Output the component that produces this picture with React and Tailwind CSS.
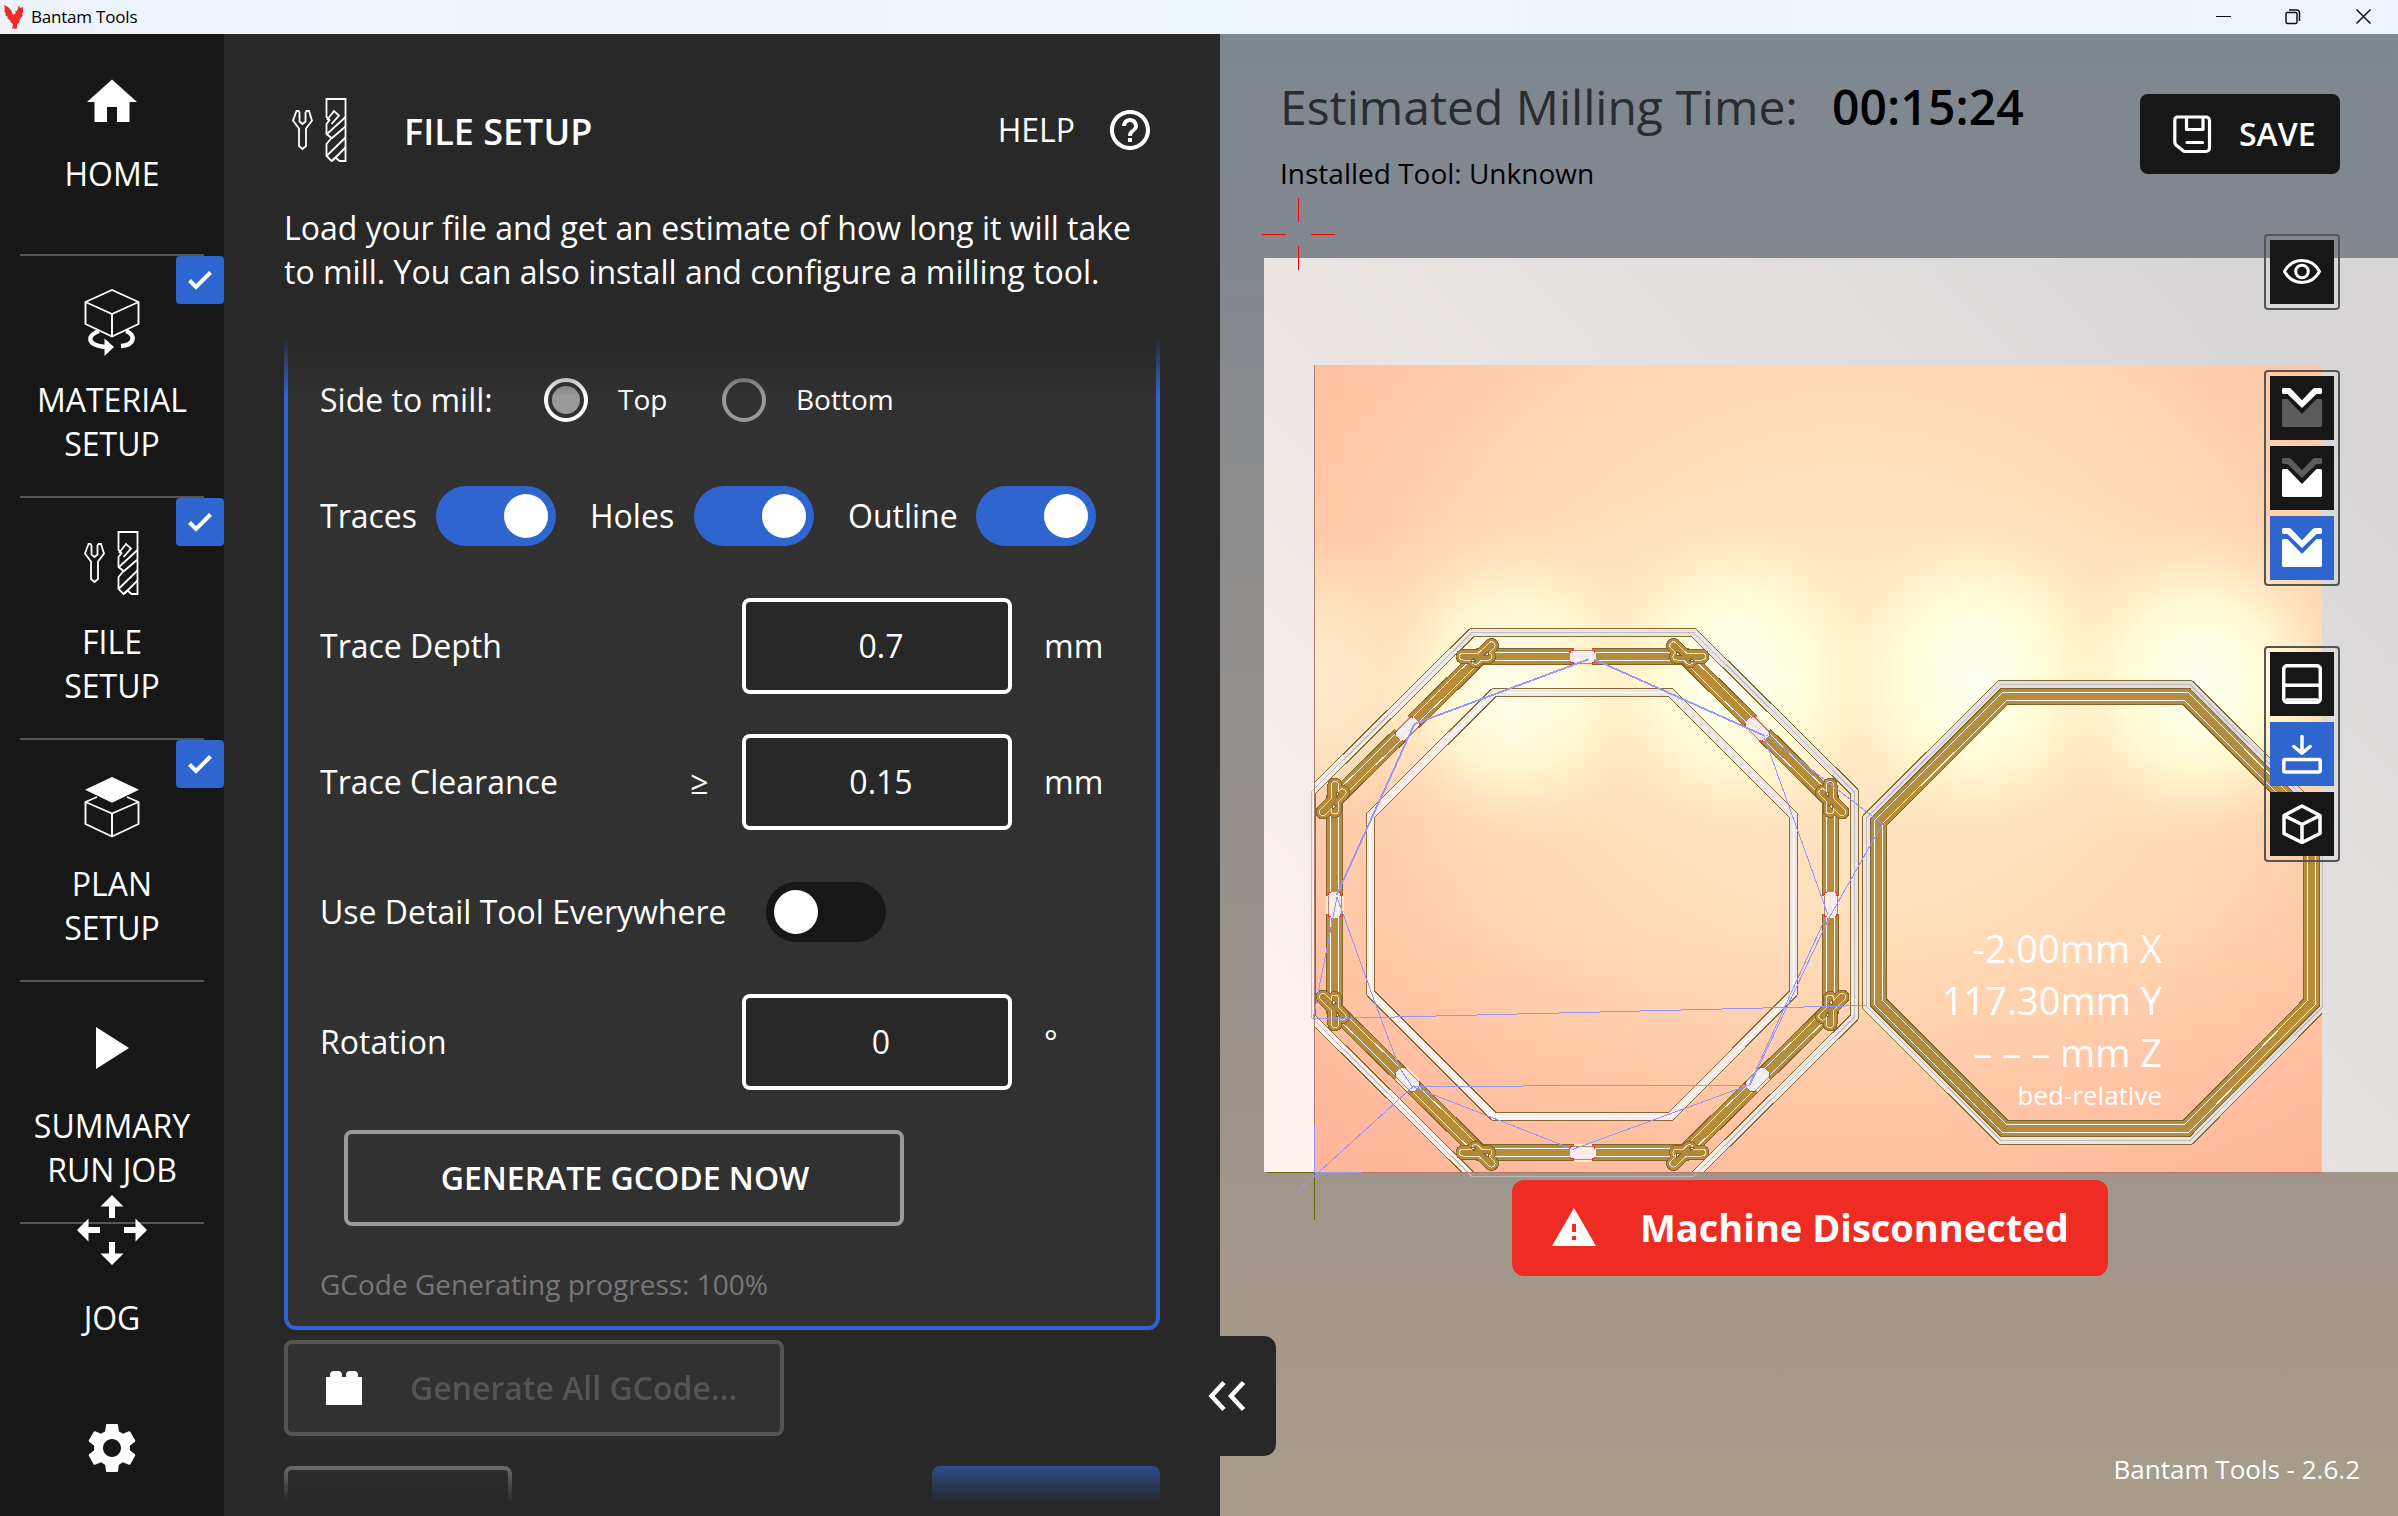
import React from "react";
import { MdHome, MdSettings, MdHelpOutline, MdWarning } from "react-icons/md";

/* ---------- Title bar ---------- */

function TitleBar() {
  return (
    <div className="flex h-[34px] shrink-0 items-center justify-between bg-linear-to-r from-[#eef3fb] from-0% via-[#ecf5f7] via-50% to-[#eff3fb]">
      <div className="flex items-center gap-[7px] pl-1">
        <svg className="h-6 w-5" viewBox="0 0 20 24" fill="#ee2c24">
          <path d="M0 0l4 2 3 3 2 5 3-2-1-2 2 0 2-6 1 3 3-1v5l-1 2 1 1-3 4-1 4-2 1v5l-1-1-1 3-1-3-2 1 1-5-3-2 1-1-4-3 1-1-3-2 1-1-2-3 1-1z" />
        </svg>
        <span className="text-[17px] leading-[22px] tracking-[-0.2px] text-black">Bantam Tools</span>
      </div>
      <svg className="mr-[22px] h-[34px] w-[164px]" viewBox="2212 0 164 34" fill="none" stroke="#111" strokeWidth="1.5">
        <path d="M2216 16.5h15" strokeWidth="1" />
        <rect x="2286" y="12.5" width="11" height="11" rx="1.5" />
        <path d="M2289 10h7.5a3 3 0 0 1 3 3v8" />
        <path d="M2356.500 9.500l14 14M2370.500 9.500l-14 14" />
      </svg>
    </div>
  );
}

/* ---------- Sidebar ---------- */

function CubeRotateIcon() {
  return (
    <svg className="h-[122px] w-[72px]" viewBox="76 256 72 122" fill="none" stroke="#fff">
      <path d="M85.500 302L112 290l26.500 12v22L112 336.500 85.500 324zM85.500 302L112 314l26.500-12M112 314v22.500" strokeWidth="1.900" />
      <path d="M99 331C86 336 87 345 105 347" strokeWidth="4.500" />
      <path d="M126 331C136 335 135 345 121 346" strokeWidth="4.500" />
      <path d="M104.500 338.500l9.500 8.500-9.500 9z" fill="#fff" stroke="none" />
    </svg>
  );
}

function BitPaths() {
  return (
    <g fill="none" stroke="#fff" strokeWidth="1.800">
      <path d="M4.500 14L1 23.500l6 8V49l3.500 3 3.500-3V31.500l6-8L17 14h-2.500l-1 1.500v9l-3 2.500-3-2.500v-9L6.500 14z" />
      <path d="M34.500 20V2h19v62h-6l-4-3.500-4 3.500-5-5V47l5-6-5-4V27l3-4z" />
      <path d="M35 23l7-9 5 4.500-7.500 8.500M35 37l18.500-17M39.500 41.500l14-12M35 58.500l18.500-18M40 64l13.500-13.500" />
    </g>
  );
}

function FileSetupIcon() {
  return (
    <svg className="h-[122px] w-[72px]" viewBox="-8 -32 72 122">
      <BitPaths />
    </svg>
  );
}

function PlanIcon() {
  return (
    <svg className="h-[122px] w-[72px]" viewBox="76 740 72 122" fill="none" stroke="#fff" strokeWidth="1.900">
      <path d="M112 777l27 12.800-27 12.900-27-12.900z" fill="#fff" stroke="none" />
      <path d="M97 797l-11.500 5v22l26.500 12.500 26.500-12.500v-22L127 797M85.500 802L112 813.500l26.500-11.500M112 813.500v23" />
    </svg>
  );
}

function CheckBadge() {
  return (
    <div className="absolute top-0 right-0 flex h-12 w-12 items-center justify-center rounded-[4px] bg-[#2f65cf]">
      <svg className="h-6 w-6" viewBox="0 0 24 24" fill="none" stroke="#fff" strokeWidth="4">
        <path d="M1.500 12.500l6.500 6.500L22.500 4.500" />
      </svg>
    </div>
  );
}

function NavItem({ icon, lines, done }) {
  return (
    <div className="relative flex h-[242px] shrink-0 flex-col items-center">
      {done && <CheckBadge />}
      <div className="flex h-[122px] items-center justify-center">{icon}</div>
      <div className="flex-1 text-center text-[32px] leading-[44px] text-white">
        {lines.map((l) => (
          <div key={l}>{l}</div>
        ))}
      </div>
      <div className="h-[2px] w-[184px] bg-[#555]" />
    </div>
  );
}

function Sidebar() {
  return (
    <nav className="flex w-[224px] shrink-0 flex-col bg-[#171717]">
      <div className="flex h-[222px] shrink-0 flex-col items-center">
        <div className="flex h-[118px] items-end pb-5">
          <MdHome className="size-[60px] text-white" />
        </div>
        <div className="flex-1 text-[32px] leading-[44px] text-white">HOME</div>
        <div className="h-[2px] w-[184px] bg-[#555]" />
      </div>
      <NavItem icon={<CubeRotateIcon />} lines={["MATERIAL", "SETUP"]} done />
      <NavItem icon={<FileSetupIcon />} lines={["FILE", "SETUP"]} done />
      <NavItem icon={<PlanIcon />} lines={["PLAN", "SETUP"]} done />
      <NavItem
        icon={
          <svg className="mt-[10px] h-11 w-9" viewBox="0 0 36 44" fill="#fff">
            <path d="M2 1l33 21L2 43z" />
          </svg>
        }
        lines={["SUMMARY", "RUN JOB"]}
      />
      <div className="relative -mt-[30px] flex flex-col items-center">
        <svg className="h-[72px] w-[72px]" viewBox="-36 -36 72 72" fill="#fff">
          <path d="M0-35l11.500 11.500H3V-12H-3v-11.500h-8.500zM0 35L-11.500 23.500H-3V12H3v11.500h8.500zM-35 0l11.500-11.500V-3H-12V3h-11.500v8.500zM35 0L23.500 11.500V3H12V-3h11.500v-8.500z" />
        </svg>
        <div className="mt-[30px] text-[32px] leading-[44px] text-white">JOG</div>
      </div>
      <div className="mt-[78px] flex justify-center">
        <MdSettings className="size-[60px] text-white" />
      </div>
    </nav>
  );
}

/* ---------- Settings panel ---------- */

function Toggle({ on }) {
  return (
    <div className={on ? "flex h-[60px] w-[120px] items-center justify-end rounded-full bg-[#2f65cf] p-2" : "flex h-[60px] w-[120px] items-center rounded-full bg-[#171717] p-2"}>
      <div className="h-11 w-11 rounded-full bg-white" />
    </div>
  );
}

function NumberRow({ label, prefix, value, unit }) {
  return (
    <div className="flex h-24 items-center">
      <div className="w-[370px]">{label}</div>
      <div className="w-[52px]">{prefix}</div>
      <div className="flex h-24 w-[270px] items-center justify-center rounded-[8px] border-4 border-white bg-[#282828] pl-2">{value}</div>
      <div className="pl-8">{unit}</div>
    </div>
  );
}

function SettingsPanel() {
  return (
    <section className="relative flex w-[996px] shrink-0 flex-col bg-[#282828] px-[60px] text-[32px] leading-[44px] text-white">
      <div className="flex h-[172px] shrink-0 items-start pt-[63px]">
        <svg className="ml-2 h-[66px] w-14" viewBox="0 0 56 66">
          <BitPaths />
        </svg>
        <div className="mt-[13px] ml-14 flex-1 text-[36px] font-semibold">FILE SETUP</div>
        <div className="mt-[11px] mr-[31px]">HELP</div>
        <MdHelpOutline className="mt-[9px] mr-[6px] size-12" />
      </div>
      <p className="h-[88px] shrink-0 whitespace-nowrap">
        Load your file and get an estimate of how long it will take
        <br />
        to mill. You can also install and configure a milling tool.
      </p>
      <div className="mt-[42px] h-[1166px] shrink-0 overflow-hidden [mask-image:linear-gradient(to_bottom,transparent_0,#000_60px,#000_1106px,transparent_100%)]">
        <div className="flex h-[994px] flex-col rounded-b-[12px] border-x-4 border-b-4 border-[#2f65cf] bg-[#313131] px-8 pt-[42px]">
          <div className="flex h-11 items-center">
            <div className="w-[224px]">Side to mill:</div>
            <div className="flex h-11 w-11 items-center justify-center rounded-full border-4 border-white">
              <div className="h-7 w-7 rounded-full bg-[#999]" />
            </div>
            <div className="ml-[30px] w-[104px] pb-[2px] text-[28px]">Top</div>
            <div className="h-11 w-11 rounded-full border-4 border-[#999]" />
            <div className="ml-[30px] pb-[2px] text-[28px]">Bottom</div>
          </div>
          <div className="mt-16 flex h-[60px] items-center">
            <div className="w-[116px]">Traces</div>
            <Toggle on />
            <div className="ml-[34px] w-[104px]">Holes</div>
            <Toggle on />
            <div className="ml-[34px] w-[128px]">Outline</div>
            <Toggle on />
          </div>
          <div className="mt-[52px] flex flex-col gap-10">
            <NumberRow label="Trace Depth" value="0.7" unit="mm" />
            <NumberRow label="Trace Clearance" prefix="≥" value="0.15" unit="mm" />
          </div>
          <div className="mt-[52px] flex h-[60px] items-center">
            <div className="w-[446px]">Use Detail Tool Everywhere</div>
            <Toggle />
          </div>
          <div className="mt-[52px]">
            <NumberRow label="Rotation" value="0" unit="°" />
          </div>
          <div className="mt-10 ml-6 flex h-24 w-[560px] shrink-0 items-center justify-center rounded-[8px] border-4 border-[#999] pl-[2px] font-semibold">
            GENERATE GCODE NOW
          </div>
          <div className="mt-[39px] text-[28px] leading-[38px] text-[#777]">GCode Generating progress: 100%</div>
        </div>
        <div className="mt-[10px] flex h-24 w-[500px] items-center rounded-[8px] border-4 border-[#555] bg-[#313131] pl-[38px] font-semibold text-[#555]">
          <svg className="h-[34px] w-9" viewBox="0 0 36 34" fill="#fff">
            <path d="M0 6h4V4a4 4 0 0 1 4-4h4a4 4 0 0 1 4 4v2h4V4a4 4 0 0 1 4-4h4a4 4 0 0 1 4 4v2h4v28H0z" />
          </svg>
          <span className="ml-12">Generate All GCode...</span>
        </div>
        <div className="mt-[30px] flex justify-between">
          <div className="h-24 w-[228px] rounded-[8px] border-4 border-[#999] bg-[#313131]" />
          <div className="h-24 w-[228px] rounded-[8px] bg-[#2f65cf]" />
        </div>
      </div>
      <div className="absolute top-[1302px] left-[996px] z-10 h-[120px] w-14 rounded-r-[12px] bg-[#282828]">
        <svg className="absolute top-[45px] -left-3 h-[30px] w-10" viewBox="0 0 40 30" fill="none" stroke="#fff" strokeWidth="4.500">
          <path d="M16 1.500L3.500 15 16 28.500M35.500 1.500L23 15l12.500 13.500" />
        </svg>
      </div>
    </section>
  );
}

/* ---------- Tool path preview ---------- */

const OUTER = "M1472 632.500H1693.500L1854.500 792V1017L1693.500 1176.500H1472L1311 1017V792Z";
const INNER = "M1494 692.500H1670.500L1793.500 815.500V993L1670.500 1116.500H1494L1370.500 993V815.500Z";
const RIGHT_CUT = "M2000.500 684.500H2190L2322.500 816.500V1007L2190 1140.500H2001L1866.500 1006.500V818Z";
const RIGHT_TRACE = "M2004.500 696.500H2186.500L2311.500 822V1002.500L2186.500 1128.500H2004.500L1878.500 1002.500V822Z";
const LEFT_TRACE = "M1480 656.500H1685L1830.500 799.500V1009.500L1685 1152.500H1480L1334.500 1009.500V799.500Z";

/* One quadrant of overshooting strands on the left ring, around its centre. */
const OVERSHOOT = "M-119.500-248H-102.500L-91-259M-247.600-119.500V-104.500L-259.500-92.500M-102.500-248L-107-243.500M-102.500-248H-94M-247.600-104.500L-240-112M-247.600-104.500V-94";
const HOLES = "M-112-243h5l-1.500-3zM-99-249h5v-4zM-250-95v-5l4 1zM-246-107v-5l3 1z";
const MIRRORS = [
  [1, 1],
  [-1, 1],
  [1, -1],
  [-1, -1],
];

const TABS = [
  [1582.5, 656.5, 0],
  [1757.3, 729, 45],
  [1830.5, 904.5, 90],
  [1757.3, 1079.5, 135],
  [1582.5, 1152.5, 0],
  [1407.5, 1079.5, 45],
  [1334.5, 904.5, 90],
  [1407.5, 729, 135],
];

const GLOWS = [
  [1290, 684, 0.5],
  [1513, 684, 0.9],
  [1738, 677, 1],
  [1976, 677, 1],
  [2200, 684, 1],
];

function Channel({ d }) {
  return (
    <g fill="none" strokeLinejoin="round">
      <path d={d} stroke="#8a6a30" strokeWidth="9.500" />
      <path d={d} stroke="url(#stock)" strokeWidth="7.500" />
    </g>
  );
}

function Trace({ d }) {
  return (
    <g fill="none" strokeLinejoin="miter">
      <path d={d} stroke="#83642a" strokeWidth="17" />
      <path d={d} stroke="#b68c3a" strokeWidth="15" />
      <path d={d} stroke="#fff" strokeWidth="9" />
      <path d={d} stroke="#b68c3a" strokeWidth="7.400" />
    </g>
  );
}

function Preview() {
  return (
    <svg className="absolute inset-0 h-full w-full" viewBox="1220 34 1178 1482" preserveAspectRatio="none">
      <defs>
        <linearGradient id="backdrop" x1="0" y1="0" x2="0" y2="1">
          <stop offset="0" stopColor="#7f8790" />
          <stop offset="0.170" stopColor="#84888f" />
          <stop offset="0.310" stopColor="#8c8c8c" />
          <stop offset="0.700" stopColor="#9c938c" />
          <stop offset="0.850" stopColor="#a3988a" />
          <stop offset="1" stopColor="#a99c8a" />
        </linearGradient>
        <linearGradient id="stock" gradientUnits="userSpaceOnUse" x1="1300" y1="1150" x2="2240" y2="300">
          <stop offset="0" stopColor="#fdf3ee" />
          <stop offset="0.450" stopColor="#ebe6e4" />
          <stop offset="1" stopColor="#d8d6d7" />
        </linearGradient>
        <radialGradient id="board" gradientUnits="userSpaceOnUse" cx="0" cy="0" r="1" gradientTransform="translate(1850 690) scale(770 670)">
          <stop offset="0" stopColor="#ffe8c6" />
          <stop offset="0.350" stopColor="#ffdfbb" />
          <stop offset="0.600" stopColor="#ffd2af" />
          <stop offset="0.850" stopColor="#ffc0a2" />
          <stop offset="1" stopColor="#ffb699" />
        </radialGradient>
        <radialGradient id="haze">
          <stop offset="0" stopColor="#fff3cc" stopOpacity="0.700" />
          <stop offset="0.500" stopColor="#fff0ca" stopOpacity="0.400" />
          <stop offset="1" stopColor="#ffe8c4" stopOpacity="0" />
        </radialGradient>
        <radialGradient id="glow">
          <stop offset="0" stopColor="#fffff2" />
          <stop offset="0.300" stopColor="#ffffe4" stopOpacity="0.950" />
          <stop offset="0.500" stopColor="#ffffd6" stopOpacity="0.800" />
          <stop offset="0.700" stopColor="#fff8d0" stopOpacity="0.420" />
          <stop offset="0.850" stopColor="#fff0c8" stopOpacity="0.150" />
          <stop offset="1" stopColor="#ffe8c4" stopOpacity="0" />
        </radialGradient>
        <linearGradient id="floor" x1="0" y1="0" x2="0" y2="1">
          <stop offset="0" stopColor="#ffb096" stopOpacity="0" />
          <stop offset="1" stopColor="#ffb096" stopOpacity="0.400" />
        </linearGradient>
        <clipPath id="boardClip">
          <rect x="1314" y="365" width="1008" height="807" />
        </clipPath>
      </defs>
      <rect x="1220" y="34" width="1178" height="1482" fill="url(#backdrop)" />
      <rect x="1264" y="258" width="1134" height="914" fill="url(#stock)" />
      <rect x="1314" y="365" width="1008" height="807" fill="url(#board)" />
      <rect x="1314" y="930" width="1008" height="242" fill="url(#floor)" />
      <g clipPath="url(#boardClip)">
        <ellipse cx="1850" cy="670" rx="700" ry="190" fill="url(#haze)" />
        {GLOWS.map(([x, y, o]) => (
          <ellipse key={x} cx={x} cy={y} rx="160" ry="170" fill="url(#glow)" opacity={o} />
        ))}
      </g>
      <g shapeRendering="crispEdges">
        <g clipPath="url(#boardClip)">
          <Channel d={OUTER} />
          <Channel d={INNER} />
          <Channel d={RIGHT_CUT} />
          <path d={INNER} fill="none" stroke="#fff" strokeWidth="1" />
        </g>
        <g fill="none" stroke="#bdbdbd" strokeWidth="1">
          <path d={OUTER} />
          <path d={RIGHT_CUT} />
        </g>
        <path d="M1314.500 365V1172M1314 1172.500H2322" stroke="#b0786a" strokeWidth="1" fill="none" />
        <path d="M1267 1172.500H1314M1314.500 1172V1220" stroke="#66660a" strokeWidth="1" fill="none" />
        <Trace d={RIGHT_TRACE} />
        <Trace d={LEFT_TRACE} />
        {MIRRORS.map(([sx, sy]) => (
          <g key={sx + "/" + sy} transform={`translate(1582.500 904.500) scale(${sx} ${sy})`} fill="none" strokeLinecap="round" strokeLinejoin="round">
            <path d={OVERSHOOT} stroke="#83642a" strokeWidth="15" />
            <path d={OVERSHOOT} stroke="#b68c3a" strokeWidth="13" />
            <path d={OVERSHOOT} stroke="#e6dfd0" strokeWidth="8" />
            <path d={OVERSHOOT} stroke="#b08839" strokeWidth="6" />
            <path d={HOLES} fill="#fff6dc" stroke="#83642a" strokeWidth="1" />
          </g>
        ))}
        {TABS.map(([x, y, a]) => (
          <g key={x + "-" + y} transform={`translate(${x} ${y}) rotate(${a})`}>
            <rect x="-9" y="-9" width="18" height="18" fill="#ffe4c4" />
            <rect x="-13" y="-7" width="26" height="14" rx="3" fill="#f03030" />
            <rect x="-9" y="-7" width="18" height="14" fill="#a88a70" />
            <rect x="-12" y="-6" width="24" height="12" rx="3" fill="#f2ebea" />
            <rect x="-13" y="-4" width="26" height="8" fill="#f2ebea" />
            <path d="M-9-3H9M-9 3H9" stroke="#fff" strokeWidth="1" />
          </g>
        ))}
        <g fill="none" stroke="#9696fa">
          <path d="M1588.500 659.300L1414.400 724L1336.700 895M1594 659.300L1765 736" strokeWidth="1.800" />
          <path
            d="M1764.500 738L1828 915M1766.500 735L1882.400 824L1829.600 917L1750 1085M1825.800 917L1749 1085L1412.500 1086.500L1573 1149.300L1749 1085M1412.500 1087L1298 1191M1412.500 1087L1399 1067L1370.400 990L1337 897L1313 1019L1866 1005.500"
            strokeWidth="1"
          />
          <path d="M1314.500 1125V1172.500H1362" strokeWidth="1" />
        </g>
        <path d="M1298.500 198v24M1298.500 246v24M1262 234.500h24M1311 234.500h24" stroke="#f00" strokeWidth="1" />
      </g>
    </svg>
  );
}

/* ---------- Overlay tools ---------- */

function LayersIcon({ top, bottom }) {
  return (
    <svg className="h-10 w-10" viewBox="0 0 40 40">
      <path fill={top} d="M0 1L1 0H7Q8.500 0 9.500 1.200L20 12.300 30.500 1.200Q31.500 0 33 0H39L40 1V5L39 6H34.500L20 20 5.500 6H1L0 5Z" />
      <path fill={bottom} d="M0 12L1 11H5.500L20 26 34.500 11H39L40 12V38L39 39H1L0 38Z" />
    </svg>
  );
}

function ToolButton({ active, children }) {
  return (
    <div className={active ? "flex h-16 w-16 items-center justify-center bg-[#2f65cf]" : "flex h-16 w-16 items-center justify-center bg-[#171717]"}>
      {children}
    </div>
  );
}

function ToolGroup({ children }) {
  return <div className="flex flex-col gap-[6px] rounded-[4px] border-2 border-[#555] p-1">{children}</div>;
}

function Viewport() {
  return (
    <main className="relative flex-1 overflow-hidden">
      <Preview />
      <div className="relative flex justify-between pr-[58px] pl-[60px]">
        <div className="pt-10">
          <div className="flex text-[48px] leading-[66px] whitespace-nowrap">
            <span className="w-[552px] text-[#2a2c2e]">Estimated Milling Time:</span>
            <span className="font-semibold tracking-[0.1px] text-black">00:15:24</span>
          </div>
          <div className="mt-[14px] text-[28px] leading-[38px] text-black">Installed Tool: Unknown</div>
        </div>
        <div className="mt-[60px] flex h-20 w-[200px] items-center rounded-[8px] bg-[#171717] pl-8 text-[32px] font-semibold text-white">
          <svg className="h-10 w-10" viewBox="0 0 40 40" fill="none" stroke="#fff" strokeWidth="3.200" strokeLinejoin="round" strokeLinecap="round">
            <path d="M5 3H34a3.500 3.500 0 0 1 3.500 3.500V34a3.500 3.500 0 0 1-3.500 3.500H13.500a4 4 0 0 1-3-1.200L4 31a4 4 0 0 1-1.200-3V6A3 3 0 0 1 5 3z" />
            <path d="M14.500 3.500V15.500H31V3.500M15 28.500H30.500" />
          </svg>
          <span className="ml-[27px]">SAVE</span>
        </div>
      </div>
      <div className="absolute top-[200px] right-[58px] flex flex-col gap-[60px]">
        <ToolGroup>
          <ToolButton>
            <svg className="h-10 w-10" viewBox="0 0 40 40" fill="none" stroke="#fff" strokeWidth="3">
              <path d="M2.500 19.500C6 13 12.500 8.500 20 8.500s14 4.500 17.500 11C34 26 27.500 30.500 20 30.500S6 26 2.500 19.500z" strokeLinejoin="round" />
              <circle cx="20" cy="19.500" r="6.300" />
            </svg>
          </ToolButton>
        </ToolGroup>
        <ToolGroup>
          <ToolButton><LayersIcon top="#fff" bottom="#5c5c5c" /></ToolButton>
          <ToolButton><LayersIcon top="#5c5c5c" bottom="#fff" /></ToolButton>
          <ToolButton active><LayersIcon top="#fff" bottom="#fff" /></ToolButton>
        </ToolGroup>
        <ToolGroup>
          <ToolButton>
            <svg className="h-10 w-10" viewBox="0 0 40 40" fill="none" stroke="#fff" strokeWidth="3.500">
              <rect x="1.700" y="1.700" width="36.600" height="36.600" rx="3.500" />
              <path d="M2 21.200h36" />
              <path d="M4 35.500h32" strokeWidth="2.500" />
            </svg>
          </ToolButton>
          <ToolButton active>
            <svg className="h-10 w-10" viewBox="0 0 40 40" fill="none" stroke="#fff" strokeWidth="3.500" strokeLinecap="round" strokeLinejoin="round">
              <path d="M20 2.500v16M11.800 12.500l8.200 6.700 8.200-6.700" />
              <rect x="1.800" y="25.500" width="36.400" height="12.600" rx="1.500" />
            </svg>
          </ToolButton>
          <ToolButton>
            <svg className="h-10 w-10" viewBox="0 0 40 40" fill="none" stroke="#fff" strokeWidth="3.500" strokeLinejoin="round">
              <path d="M20 2L38 11.500V29.500L20 38.500 2 29.500V11.500zM2 11.500l18 9 18-9M20 20.500v18" />
            </svg>
          </ToolButton>
        </ToolGroup>
      </div>
      <div className="absolute top-[888px] right-[236px] text-right text-[38px] leading-[52px] text-white">
        <div>-2.00mm X</div>
        <div>117.30mm Y</div>
        <div>– – – mm Z</div>
        <div className="text-[26px] leading-[34px]">bed-relative</div>
      </div>
      <div className="absolute top-[1146px] left-[292px] flex h-24 w-[596px] items-center rounded-[12px] bg-[#ee2c24] pl-[38px] text-white">
        <MdWarning className="size-12" />
        <span className="ml-[42px] pb-[2px] text-[38px] font-bold whitespace-nowrap">Machine Disconnected</span>
      </div>
      <div className="absolute right-[38px] bottom-[28px] text-[26px] leading-[38px] text-white">Bantam Tools - 2.6.2</div>
    </main>
  );
}

export default function App() {
  return (
    <div className="flex h-[1516px] w-[2398px] flex-col overflow-hidden bg-[#171717] font-['Open_Sans',sans-serif]">
      <TitleBar />
      <div className="flex min-h-0 flex-1">
        <Sidebar />
        <SettingsPanel />
        <Viewport />
      </div>
    </div>
  );
}
